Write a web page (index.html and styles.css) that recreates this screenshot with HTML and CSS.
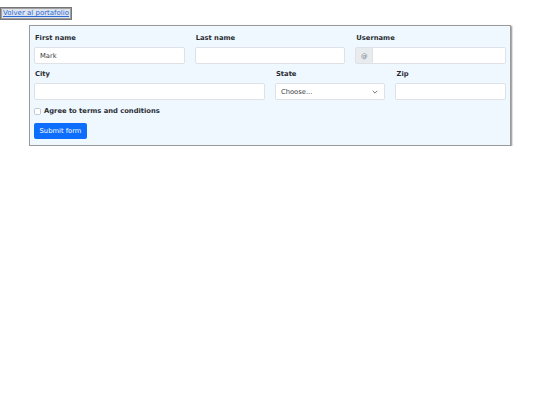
FILE: index.html
```html
<!DOCTYPE html>
<html lang="es">
<head>
<meta charset="utf-8">
<title>Form</title>
<link rel="stylesheet" href="styles.css">
</head>
<body>
<div class="topbar"><a class="back" href="#">Volver al portafolio</a></div>
<form class="card">
  <div class="grid">
    <div class="field span4">
      <label class="lbl">First name</label>
      <div class="input"><span class="val">Mark</span></div>
    </div>
    <div class="field span4">
      <label class="lbl">Last name</label>
      <div class="input"></div>
    </div>
    <div class="field span4">
      <label class="lbl">Username</label>
      <div class="group">
        <span class="addon">@</span>
        <div class="input joined"></div>
      </div>
    </div>
    <div class="field span6">
      <label class="lbl">City</label>
      <div class="input"></div>
    </div>
    <div class="field span3">
      <label class="lbl">State</label>
      <div class="input select"><span class="val">Choose...</span>
        <svg class="chev" width="6" height="4" viewBox="0 0 6 4"><path d="M0.7 0.8 L3 3.1 L5.3 0.8" fill="none" stroke="#555" stroke-width="0.8"/></svg>
      </div>
    </div>
    <div class="field span3">
      <label class="lbl">Zip</label>
      <div class="input"></div>
    </div>
  </div>
  <div class="check"><span class="box"></span><span class="lbl">Agree to terms and conditions</span></div>
  <div class="btn">Submit form</div>
</form>
</body>
</html>
```
FILE: styles.css
```css
html, body {
  margin: 0;
  padding: 0;
  background: #ffffff;
  font-family: "DejaVu Sans", sans-serif;
  color: #212529;
}
.topbar {
  height: 25px;
}
.back {
  display: inline-block;
  box-sizing: border-box;
  height: 13px;
  padding: 0 2px;
  border: 1px solid #767676;
  box-shadow: 0 0 0 1px #a0a0a0 inset;
  background: #dfe4ec;
  color: #2a6ad8;
  font-size: 7px;
  line-height: 11px;
  text-decoration: underline;
}
.card {
  display: block;
  box-sizing: border-box;
  margin: 0 0 0 29px;
  width: 482px;
  padding: 7px 4px 6px 4px;
  background: #f0f8ff;
  border: 1px solid #9a9a9a;
  box-shadow: 1px 1px 1.5px rgba(0,0,0,0.45);
}
.grid {
  display: grid;
  grid-template-columns: repeat(12, 1fr);
  column-gap: 10px;
  row-gap: 5px;
}
.span4 { grid-column: span 4; }
.span6 { grid-column: span 6; }
.span3 { grid-column: span 3; }
.lbl {
  display: block;
  font-size: 6.75px;
  font-weight: bold;
  line-height: 10px;
  margin: 0 0 4px 1px;
  color: #2a2e33;
}
.input {
  box-sizing: border-box;
  height: 17px;
  background: #fff;
  border: 1px solid #dee2e6;
  border-radius: 2px;
  display: flex;
  align-items: center;
  padding: 0 5px;
  font-size: 6.75px;
}
.val { color: #3a3f44; }
.select {
  justify-content: space-between;
  padding-right: 6px;
}
.chev { display: block; }
.group {
  display: flex;
}
.addon {
  box-sizing: border-box;
  width: 18px;
  height: 17px;
  background: #e9ecef;
  border: 1px solid #dee2e6;
  border-radius: 2px 0 0 2px;
  display: flex;
  align-items: center;
  justify-content: center;
  font-size: 6.5px;
  color: #6c757d;
}
.joined {
  flex: 1;
  border-left: none;
  border-radius: 0 2px 2px 0;
}
.check {
  display: flex;
  align-items: center;
  margin: 6px 0 0 0;
  height: 10px;
}
.box {
  box-sizing: border-box;
  width: 7px;
  height: 7px;
  border: 1px solid #c4c8cc;
  border-radius: 1.5px;
  background: #fff;
  margin-right: 3px;
}
.check .lbl {
  margin: 0;
}
.btn {
  display: inline-flex;
  align-items: center;
  box-sizing: border-box;
  margin-top: 7px;
  height: 16px;
  width: 53px;
  justify-content: center;
  background: #0d6efd;
  border-radius: 2px;
  color: #fff;
  font-size: 6.75px;
}
```
